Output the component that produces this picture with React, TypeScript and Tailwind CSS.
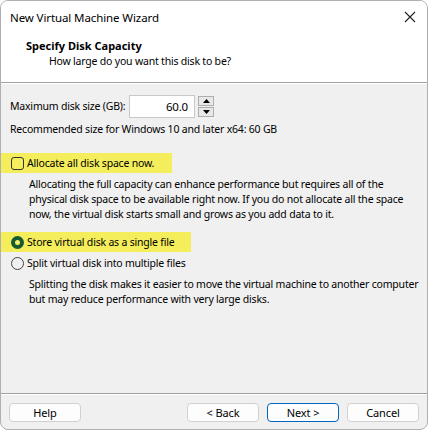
import React from "react";

const font = { fontFamily: '"Noto Sans", "Open Sans", sans-serif' };

function Btn({ label, primary }: { label: string; primary?: boolean }) {
  return (
    <div
      className={`w-[72px] h-[19px] flex items-center justify-center rounded-[4px] bg-[#fdfdfd] text-[11px] tracking-[-0.1px] text-black border ${
        primary ? "border-[#0067c0]" : "border-[#d0d0d0]"
      }`}
    >
      {label}
    </div>
  );
}

export default function App() {
  return (
    <div className="w-[428px] h-[430px] bg-white" style={font}>
      <div className="w-[428px] h-[430px] rounded-[8px] border border-[#b0b0b0] overflow-hidden flex flex-col bg-[#f0f0f0] text-[10.5px] tracking-[-0.2px] leading-[15px] text-black whitespace-nowrap">
        {/* title bar + header */}
        <div className="bg-white h-[81px] flex flex-col shrink-0">
          <div className="h-[32px] flex items-center justify-between pl-[9px] pr-[10px]">
            <span className="text-[11.5px] tracking-[-0.1px]">New Virtual Machine Wizard</span>
            <svg width="14" height="14" viewBox="0 0 14 14">
              <path d="M2 2L12 12M12 2L2 12" stroke="#222" strokeWidth="1.1" />
            </svg>
          </div>
          <div className="pl-[25px] pt-[5px] font-bold text-[11px] tracking-[0px]">Specify Disk Capacity</div>
          <div className="pl-[48px] pt-[1px]">How large do you want this disk to be?</div>
        </div>
        <div className="h-px bg-[#a0a0a0] shrink-0" />
        <div className="h-px bg-white shrink-0" />

        {/* body */}
        <div className="flex-1 flex flex-col">
          <div className="flex items-center pl-[9px] pt-[11px]">
            <span className="w-[119px]">Maximum disk size (GB):</span>
            <div className="w-[66px] h-[23px] bg-white border border-[#c8c8c8] flex items-center justify-end pr-[6px] text-[11.5px]">
              60.0
            </div>
            <div className="ml-[3px] flex flex-col gap-[1px]">
              <div className="w-[16px] h-[10px] border border-[#adadad] bg-[#e8e8e8] flex items-center justify-center">
                <svg width="7" height="4" viewBox="0 0 7 4"><path d="M0 4L3.5 0L7 4Z" fill="#000" /></svg>
              </div>
              <div className="w-[16px] h-[10px] border border-[#adadad] bg-[#e8e8e8] flex items-center justify-center">
                <svg width="7" height="4" viewBox="0 0 7 4"><path d="M0 0L3.5 4L7 0Z" fill="#000" /></svg>
              </div>
            </div>
          </div>
          <div className="pl-[9px] pt-[4px]">Recommended size for Windows 10 and later x64: 60 GB</div>

          <div className="mt-[16px] w-[171px] h-[20px] bg-[#f5ee5c] flex items-center pl-[10px]">
            <div className="w-[13px] h-[13px] rounded-[3px] border border-[#333] mr-[3px]" />
            <span>Allocate all disk space now.</span>
          </div>
          <div className="pl-[28px] pt-[4px] flex flex-col">
            <span>Allocating the full capacity can enhance performance but requires all of the</span>
            <span>physical disk space to be available right now. If you do not allocate all the space</span>
            <span>now, the virtual disk starts small and grows as you add data to it.</span>
          </div>

          <div className="mt-[10px] w-[190px] h-[20px] bg-[#f5ee5c] flex items-center pl-[10px]">
            <div className="w-[13px] h-[13px] rounded-full bg-[#165a2f] flex items-center justify-center mr-[3px]">
              <div className="w-[5px] h-[5px] rounded-full bg-[#f3ee66]" />
            </div>
            <span>Store virtual disk as a single file</span>
          </div>
          <div className="h-[20px] flex items-center pl-[10px] mt-[1px]">
            <div className="w-[13px] h-[13px] rounded-full border border-[#444] mr-[3px]" />
            <span>Split virtual disk into multiple files</span>
          </div>
          <div className="pl-[28px] pt-[4px] flex flex-col">
            <span>Splitting the disk makes it easier to move the virtual machine to another computer</span>
            <span>but may reduce performance with very large disks.</span>
          </div>
        </div>

        <div className="h-px bg-[#a0a0a0] shrink-0" />
        <div className="h-px bg-white shrink-0" />
        <div className="h-[34px] shrink-0 flex items-center pl-[8px] pr-[8px]">
          <Btn label="Help" />
          <div className="flex-1" />
          <div className="flex gap-[8px]">
            <Btn label="< Back" />
            <Btn label="Next >" primary />
            <Btn label="Cancel" />
          </div>
        </div>
      </div>
    </div>
  );
}
